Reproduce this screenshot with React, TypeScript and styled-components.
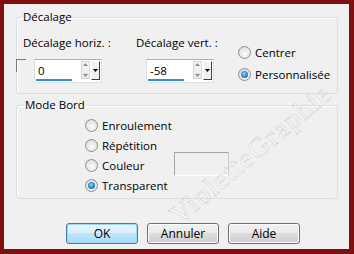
import React from 'react';
import styled, { createGlobalStyle } from 'styled-components';

const GlobalStyle = createGlobalStyle`
  html, body {
    margin: 0;
    padding: 0;
    background: #f0f0f0;
  }
  body {
    font-family: 'Open Sans', 'Noto Sans', sans-serif;
    font-size: 11.5px;
    color: #000;
  }
`;

const Frame = styled.div`
  position: relative;
  box-sizing: border-box;
  width: 354px;
  height: 254px;
  border-style: solid;
  border-color: #7e1010;
  border-width: 4px 5px 5px 4px;
  background: #f0f0f0;
  padding: 5px 11px 0 12px;
  overflow: hidden;
`;

const Group = styled.fieldset<{ $gap?: number }>`
  margin: ${(p) => p.$gap ?? 0}px 0 0 0;
  padding: 0;
  border: 1px solid #d5dfe5;
  border-radius: 3px;
  box-shadow: inset 1px 1px 0 #fff;
  min-width: 0;
`;

const Legend = styled.legend<{ $indent: number }>`
  margin-left: ${(p) => p.$indent}px;
  padding: 0 1px;
  line-height: 16px;
`;

const OffsetBody = styled.div`
  display: grid;
  grid-template-columns: 119px 102px 1fr;
  padding: 10px 0 10px 0;
`;

const FieldCol = styled.div<{ $labelIndent: number }>`
  display: flex;
  flex-direction: column;
  gap: 8px;
  & > label {
    padding-left: ${(p) => p.$labelIndent}px;
    line-height: 16px;
    white-space: nowrap;
  }
`;

const FieldRow = styled.div<{ $indent: number }>`
  display: flex;
  align-items: flex-start;
  padding-left: ${(p) => p.$indent}px;
`;

const Check = styled.span`
  box-sizing: border-box;
  width: 10px;
  height: 13px;
  margin: 0 8px 0 -1px;
  border-top: 1px solid #7a7a7a;
  border-left: 1px solid #7a7a7a;
`;

const SpinField = styled.div`
  box-sizing: border-box;
  display: flex;
  width: 68px;
  height: 24px;
  padding: 1px 1px 1px 0;
  background: #fff;
  border: 1px solid #dde2e8;
  border-top-color: #abadb3;
`;

const ValueCol = styled.div`
  display: flex;
  flex-direction: column;
  padding: 2px 0 0 0;
  & > span {
    padding-left: 3px;
    line-height: 16px;
  }
`;

const Underline = styled.div`
  width: 36px;
  height: 2px;
  margin-left: 1px;
  background: #3c8dc5;
`;

const SpinArrows = styled.div`
  box-sizing: border-box;
  display: flex;
  flex-direction: column;
  justify-content: space-between;
  align-items: center;
  width: 9px;
  height: 18px;
  margin-left: auto;
  padding: 1px 0;
  border: 1px solid #d6d6d6;
  background: linear-gradient(#f7f7f7, #e9e9e9);
`;

const DropButton = styled.div`
  box-sizing: border-box;
  display: flex;
  align-items: center;
  justify-content: center;
  width: 9px;
  height: 19px;
  margin-left: 1px;
  background: #f0f0f0;
  border: 1px solid;
  border-color: #fff #404040 #404040 #fff;
`;

const RadioCol = styled.div<{ $top: number }>`
  display: flex;
  flex-direction: column;
  gap: 6px;
  padding-top: ${(p) => p.$top}px;
`;

const RadioRow = styled.label`
  display: flex;
  align-items: center;
  gap: 4px;
  height: 16px;
  white-space: nowrap;
`;

const Dot = styled.span<{ $on?: boolean }>`
  box-sizing: border-box;
  position: relative;
  flex: none;
  width: 13px;
  height: 13px;
  border-radius: 50%;
  border: 1px solid #8e8f8f;
  background: radial-gradient(circle at 55% 60%, #fdfdfd 0%, #e6e6e6 55%, #cfcfcf 100%);
  &::after {
    content: '';
    display: ${(p) => (p.$on ? 'block' : 'none')};
    position: absolute;
    left: 2px;
    top: 2px;
    width: 7px;
    height: 7px;
    border-radius: 50%;
    background: radial-gradient(circle at 45% 40%, #9fdcfa 0%, #3a9ad0 40%, #154c74 100%);
  }
`;

const ModeBody = styled.div`
  display: grid;
  grid-template-columns: 89px 1fr;
  row-gap: 4px;
  padding: 4px 0 5px 68px;
`;

const Swatch = styled.div`
  box-sizing: border-box;
  width: 55px;
  height: 24px;
  margin: -5px 0 -3px 0;
  border: 1px solid #a5a5a5;
  border-right-color: #c9c9c9;
  border-bottom-color: #fff;
`;

const Buttons = styled.div`
  display: flex;
  gap: 9px;
  margin-top: 24px;
  padding-left: 50px;
`;

const Button = styled.button<{ $primary?: boolean }>`
  box-sizing: border-box;
  width: 72px;
  height: 21px;
  padding: 0;
  font: inherit;
  font-size: 12px;
  color: #000;
  border-radius: 3px;
  border: 1px solid ${(p) => (p.$primary ? '#3c7fb1' : '#707070')};
  background: ${(p) =>
    p.$primary
      ? 'linear-gradient(#eaf6fd 0%, #d9f0fc 45%, #bee6fd 50%, #a7d9f5 100%)'
      : 'linear-gradient(#f2f2f2 0%, #ebebeb 45%, #dddddd 50%, #cfcfcf 100%)'};
  box-shadow: inset 0 0 0 1px ${(p) => (p.$primary ? '#9fd7f3' : '#fcfcfc')};
`;

const Watermark = styled.div`
  position: absolute;
  left: 112px;
  top: 134px;
  width: 270px;
  text-align: center;
  transform: rotate(-40deg);
  font-family: 'Liberation Serif', serif;
  font-size: 28px;
  letter-spacing: 1.5px;
  color: rgba(255, 255, 255, 0.5);
  -webkit-text-stroke: 0.5px rgba(140, 140, 140, 0.4);
  pointer-events: none;
`;

function Arrow({ up, color }: { up?: boolean; color: string }) {
  return (
    <svg width="5" height="3" viewBox="0 0 5 3">
      <path d={up ? 'M0 3 L2.5 0 L5 3 Z' : 'M0 0 L5 0 L2.5 3 Z'} fill={color} />
    </svg>
  );
}

function Spin({ value }: { value: string }) {
  return (
    <SpinField>
      <ValueCol>
        <span>{value}</span>
        <Underline />
      </ValueCol>
      <SpinArrows>
        <Arrow up color="#8a8a8a" />
        <Arrow color="#8a8a8a" />
      </SpinArrows>
      <DropButton>
        <Arrow color="#000" />
      </DropButton>
    </SpinField>
  );
}

export default function App() {
  return (
    <Frame>
      <GlobalStyle />
      <Group>
        <Legend $indent={5}>Décalage</Legend>
        <OffsetBody>
          <FieldCol $labelIndent={6}>
            <label>Décalage horiz. :</label>
            <FieldRow $indent={0}>
              <Check />
              <Spin value="0" />
            </FieldRow>
          </FieldCol>
          <FieldCol $labelIndent={0}>
            <label>Décalage vert. :</label>
            <FieldRow $indent={10}>
              <Spin value="-58" />
            </FieldRow>
          </FieldCol>
          <RadioCol $top={9}>
            <RadioRow>
              <Dot />
              Centrer
            </RadioRow>
            <RadioRow>
              <Dot $on />
              Personnalisée
            </RadioRow>
          </RadioCol>
        </OffsetBody>
      </Group>
      <Group $gap={3}>
        <Legend $indent={7}>Mode Bord</Legend>
        <ModeBody>
          <RadioRow>
            <Dot />
            Enroulement
          </RadioRow>
          <span />
          <RadioRow>
            <Dot />
            Répétition
          </RadioRow>
          <span />
          <RadioRow>
            <Dot />
            Couleur
          </RadioRow>
          <Swatch />
          <RadioRow>
            <Dot $on />
            Transparent
          </RadioRow>
          <span />
        </ModeBody>
      </Group>
      <Buttons>
        <Button $primary>OK</Button>
        <Button>Annuler</Button>
        <Button>Aide</Button>
      </Buttons>
      <Watermark>VioletteGraphie</Watermark>
    </Frame>
  );
}
